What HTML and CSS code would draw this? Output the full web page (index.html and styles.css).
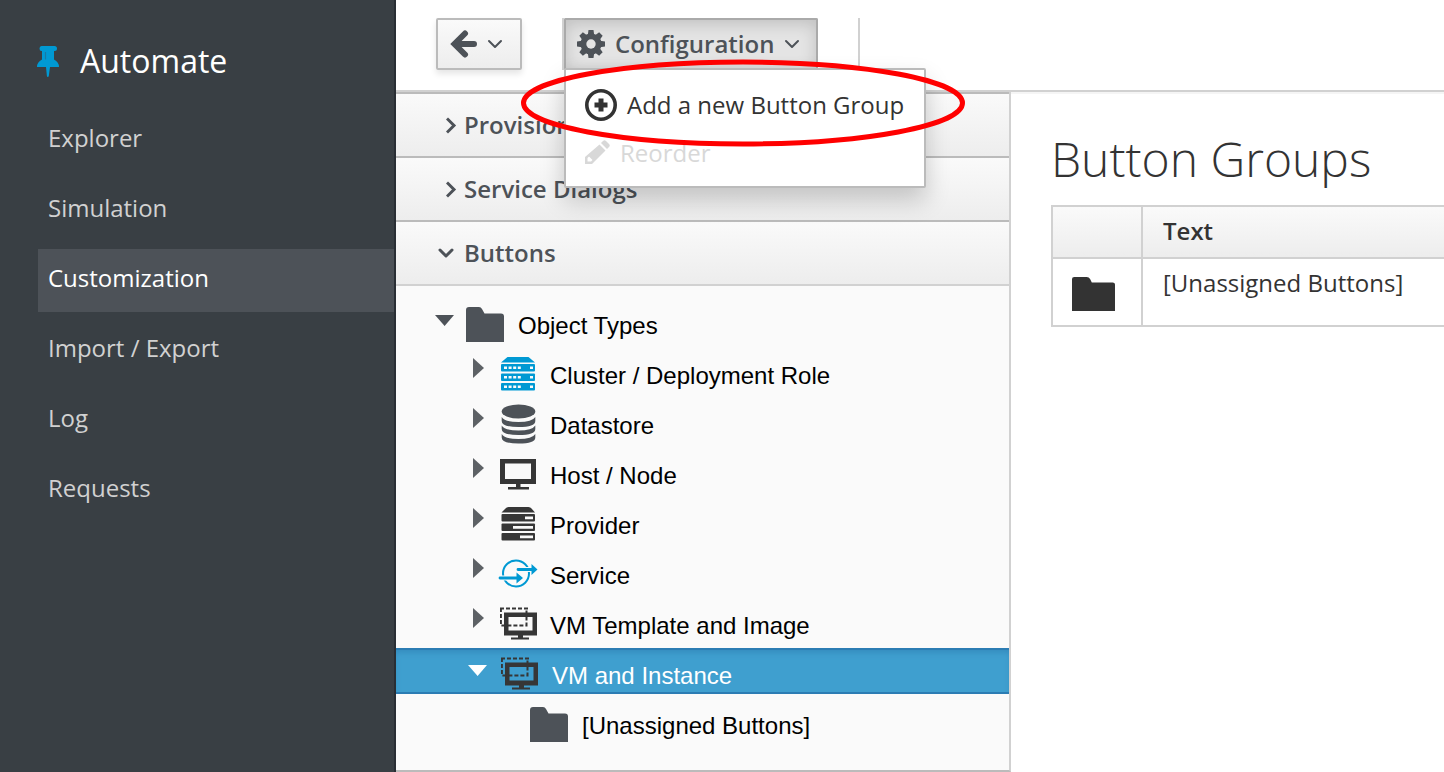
FILE: index.html
```html
<!DOCTYPE html>
<html lang="en">
<head>
<meta charset="utf-8">
<title>Automate: Customization</title>
<link rel="stylesheet" href="styles.css">
</head>
<body>
<svg class="sprite" aria-hidden="true">
  <symbol id="folder" viewBox="0 0 38 35"><path d="M0 35V3Q0 0 3 0h10q2 0 3 2l2.500 4.500H35q3 0 3 3V35z"/></symbol>
  <symbol id="down" viewBox="0 0 16 10"><path d="M2 2l6 6 6-6" fill="none" stroke="currentColor" stroke-linecap="round" stroke-linejoin="round"/></symbol>
  <symbol id="right" viewBox="0 0 12 18"><path d="M2 3.500l6 6-6 6" fill="none" stroke="currentColor" stroke-width="3" stroke-linecap="square"/></symbol>
  <symbol id="vm" viewBox="0 0 38 36">
    <path d="M4 6.500h33v23H23v2h6v2H11v-2h7v-2H4zM8.500 11v13.500h24V11z" fill-rule="evenodd"/>
    <path d="M0 2.500h28" fill="none" stroke="currentColor" stroke-width="2" stroke-dasharray="4 2"/>
    <path d="M.900 2v17.500h25.600V2" fill="none" stroke="currentColor" stroke-width="2" stroke-dasharray="4 2"/>
  </symbol>
</svg>
<div class="app">
  <nav class="sidebar" aria-label="Automate">
    <h2 class="sidebar-title">
      <svg class="pin" viewBox="0 0 22 31" aria-hidden="true"><path d="M4.500 0h13Q20 0 20 2.500T17.500 5H17v8.500Q22 16 22 21H13l-1.200 9q-.3 1-1 1t-.9-1L9 21H0q0-5 5-7.500V5h-.5Q2.500 5 2.500 2.500T4.500 0z"/><path d="M8.500 6v7.500" stroke="#1779a5" stroke-width="1.200"/></svg>
      Automate
    </h2>
    <ul class="sidebar-list">
      <li><a href="#">Explorer</a></li>
      <li><a href="#">Simulation</a></li>
      <li><a href="#" class="active" aria-current="page">Customization</a></li>
      <li><a href="#">Import / Export</a></li>
      <li><a href="#">Log</a></li>
      <li><a href="#">Requests</a></li>
    </ul>
  </nav>
  <div class="workspace">
    <header class="toolbar">
      <button class="btn btn-back" type="button" aria-label="Back">
        <svg class="icon-back" viewBox="0 0 28 28" aria-hidden="true"><path d="M15 3.500L4.500 14 15 24.500M6 14h18" fill="none" stroke="currentColor" stroke-width="6" stroke-linecap="round" stroke-linejoin="miter"/></svg>
        <svg class="chevron"><use href="#down"/></svg>
      </button>
      <div class="menu-group">
        <button class="btn btn-open" type="button" aria-expanded="true">
          <svg class="icon-gear" viewBox="-14 -14 28 28" aria-hidden="true">
            <g fill="currentColor"><circle r="10.500"/>
            <path id="tooth" d="M-3.200-9L-2.500-14h5L3.200-9zM-3.200 9L-2.500 14h5L3.200 9zM-9-3.200L-14-2.500v5L-9 3.200zM9-3.200L14-2.500v5L9 3.200z"/>
            <use href="#tooth" transform="rotate(45)"/></g>
            <circle r="4.700" fill="#e4e4e4"/>
          </svg>
          Configuration
          <svg class="chevron"><use href="#down"/></svg>
        </button>
        <div class="menu">
          <button class="menu-item" type="button">
            <svg class="icon-plus" viewBox="0 0 32 32" aria-hidden="true"><circle cx="16" cy="16" r="14.200" fill="none" stroke="currentColor" stroke-width="3.600"/><path d="M16 9.500v13M9.500 16h13" stroke="currentColor" stroke-width="5"/></svg>
            Add a new Button Group
          </button>
          <button class="menu-item" type="button" disabled>
            <svg class="icon-pencil" viewBox="0 0 25 25" aria-hidden="true"><path d="M14.500 4.500l6 6L7 24H0v-7zM2.500 18v3.500H6L7.500 20 4 16.500z" fill-rule="evenodd"/><path d="M16 3l2-2q1.500-1.500 3 0l3 3q1.500 1.500 0 3l-2 2z"/></svg>
            Reorder
          </button>
        </div>
        <svg class="callout" viewBox="0 0 444 88" aria-hidden="true"><ellipse cx="222" cy="44" rx="219.500" ry="41" fill="none" stroke="#f00" stroke-width="5"/></svg>
      </div>
    </header>
    <div class="columns">
      <section class="explorer">
        <button class="section" type="button"><svg class="arrow-right"><use href="#right"/></svg>Provisioning</button>
        <button class="section" type="button"><svg class="arrow-right"><use href="#right"/></svg>Service Dialogs</button>
        <button class="section section-open" type="button" aria-expanded="true"><svg class="arrow-down"><use href="#down"/></svg>Buttons</button>
        <ul class="tree">
          <li class="node root"><span class="toggle open"></span><svg class="folder"><use href="#folder"/></svg>Object Types</li>
          <li class="node"><span class="toggle"></span>
            <svg class="icon blue" viewBox="0 0 38 36" aria-hidden="true"><path d="M7.500 1h21l6.500 5.500H1z"/><rect x="1" y="8" width="34" height="7.500" rx="1"/><rect x="1" y="17.500" width="34" height="7.500" rx="1"/><rect x="1" y="27" width="34" height="7.500" rx="1"/><path d="M4 11.800h17M30 11.800h3M4 21.300h17M30 21.300h3M4 30.800h17M30 30.800h3" stroke="#fafafa" stroke-width="2.500" stroke-dasharray="3 1.600"/></svg>Cluster / Deployment Role</li>
          <li class="node"><span class="toggle"></span>
            <svg class="icon icon-tall" viewBox="0 0 38 40" aria-hidden="true"><ellipse cx="18.500" cy="7.500" rx="16.800" ry="7"/><path d="M1.700 13q3 5 16.800 5t16.800-5v4q0 6-16.800 6T1.700 17zM1.700 21.500q3 5 16.800 5t16.800-5v3.500q0 6-16.800 6T1.700 25zM1.700 30q3 5 16.800 5t16.800-5v3.500q0 6-16.800 6T1.700 33.500z"/></svg>Datastore</li>
          <li class="node"><span class="toggle"></span>
            <svg class="icon dark" viewBox="0 0 38 36" aria-hidden="true"><path d="M0 3h36v25H20.500v3H29v2.500H8V31h8v-3H0zM5 7.500v15.500h26V7.500z" fill-rule="evenodd"/></svg>Host / Node</li>
          <li class="node"><span class="toggle"></span>
            <svg class="icon dark" viewBox="0 0 38 36" aria-hidden="true"><path d="M8.500 1h20q2 0 3 1.500L35 6.500H1.500l4-4Q6.500 1 8.500 1z"/><rect x="1.500" y="8" width="33.500" height="7.500" rx="1"/><rect x="1.500" y="17.500" width="33.500" height="7.500" rx="1"/><rect x="1.500" y="27" width="33.500" height="7.500" rx="1"/><path d="M25 11.800h8M13 21.300h20M20 30.800h13" stroke="#fafafa" stroke-width="2.800"/></svg>Provider</li>
          <li class="node"><span class="toggle"></span>
            <svg class="icon icon-wide blue" viewBox="0 0 40 36" aria-hidden="true"><circle cx="18" cy="17.500" r="13" fill="none" stroke="currentColor" stroke-width="2"/><path d="M28 13.500h6M3 22h6" stroke="#fafafa" stroke-width="5"/><path d="M20 13.500h14M2 22h18" stroke="currentColor" stroke-width="2.800" stroke-linecap="round"/><path d="M33.500 8l6 5.500-6 5.500zM18.500 16.500l6.500 5.500-6.500 5.500z"/></svg>Service</li>
          <li class="node"><span class="toggle"></span><svg class="icon dark"><use href="#vm"/></svg>VM Template and Image</li>
          <li class="node selected" aria-current="true"><span class="toggle open"></span><svg class="icon dark"><use href="#vm"/></svg>VM and Instance</li>
          <li class="node leaf"><svg class="folder"><use href="#folder"/></svg>[Unassigned Buttons]</li>
        </ul>
      </section>
      <main class="content">
        <h1>Button Groups</h1>
        <table>
          <thead><tr><th class="icon-cell"></th><th scope="col">Text</th></tr></thead>
          <tbody><tr><td class="icon-cell"><svg class="folder-large" viewBox="0 0 38 35" preserveAspectRatio="none" aria-hidden="true"><path d="M0 35V3Q0 1 2 1h11q2 0 3 2l1.500 3.500H36q2 0 2 2V35z"/></svg></td><td>[Unassigned Buttons]</td></tr></tbody>
        </table>
      </main>
    </div>
  </div>
</div>
</body>
</html>
```
FILE: styles.css
```css
* { box-sizing: border-box; }
body {
  margin: 0;
  background: #fff;
  color: #333;
  font: 24px/32px "Open Sans", sans-serif;
}
ul { list-style: none; margin: 0; padding: 0; }
button { font: inherit; color: inherit; margin: 0; border-radius: 0; text-align: left; }
svg { flex: none; fill: currentColor; }
.sprite { position: absolute; width: 0; height: 0; }
.app { display: flex; min-height: 100vh; }

.sidebar {
  flex: 0 0 396px;
  padding: 37px 0 0 38px;
  background: #393f44;
  border-right: 2px solid #292e34;
}
.sidebar-title {
  display: flex;
  align-items: center;
  gap: 21px;
  margin: 0 0 24px -1px;
  color: #fff;
  font-size: 32px;
  font-weight: 400;
  line-height: 48px;
}
.pin { width: 22px; height: 31px; color: #0099d3; }
.sidebar-list { display: grid; gap: 7px; }
.sidebar-list a {
  display: block;
  padding: 13px 10px 18px;
  color: #d1d1d1;
  text-decoration: none;
}
.sidebar-list .active { background: #4d5258; color: #fff; }

.workspace { flex: 1; min-width: 0; display: flex; flex-direction: column; }
.toolbar {
  display: flex;
  gap: 40px;
  padding: 18px 40px 20px;
  border-bottom: 2px solid #d1d1d1;
}
.btn {
  display: flex;
  align-items: center;
  height: 52px;
  border: 2px solid #bbb;
  border-radius: 2px;
  background: linear-gradient(#fafafa, #ededed);
  box-shadow: 0 4px 6px rgba(3, 3, 3, .1);
  color: #4d5258;
  font-weight: 600;
}
.btn-back { gap: 9px; padding: 0 17px 0 12px; }
.icon-back, .icon-gear { width: 28px; height: 28px; }
.chevron { width: 16px; height: 10px; stroke-width: 2; }
.menu-group {
  position: relative;
  display: flex;
  padding-right: 40px;
  border: solid #d1d1d1;
  border-width: 0 2px;
}
.btn-open {
  gap: 10px;
  padding: 0 16px 0 11px;
  border-color: #aaa #aaa #bbb;
  background: #e4e4e4;
  box-shadow: inset 0 4px 16px rgba(3, 3, 3, .16);
}
.menu {
  position: absolute;
  top: 50px;
  left: 0;
  padding: 10px 0;
  border: 2px solid #bbb;
  border-radius: 2px;
  background: #fff;
  box-shadow: 0 12px 24px rgba(3, 3, 3, .2);
}
.menu-item {
  display: flex;
  align-items: center;
  gap: 10px;
  width: 100%;
  height: 48px;
  padding: 1px 20px 0 19px;
  border: 0;
  background: none;
  white-space: nowrap;
}
.menu-item:disabled { color: #d8d8d8; }
.icon-plus { width: 32px; height: 32px; }
.icon-pencil { width: 25px; height: 25px; }
.callout { position: absolute; top: 41px; left: -43px; width: 444px; height: 88px; pointer-events: none; }

.columns { flex: 1; display: flex; }
.explorer {
  flex: 0 0 615px;
  display: flex;
  flex-direction: column;
  border-right: 2px solid #d1d1d1;
  border-bottom: 2px solid #bbb;
  background: #fafafa;
}
.section {
  display: flex;
  align-items: center;
  gap: 6px;
  height: 64px;
  padding: 0 42px;
  border: 0;
  border-top: 2px solid #bbb;
  background: linear-gradient(#fafafa, #ededed);
  color: #4d5258;
  font-weight: 600;
}
.section-open { height: 66px; border-bottom: 2px solid #d1d1d1; }
.arrow-right { width: 12px; height: 18px; margin-left: 8px; }
.arrow-down { width: 16px; height: 10px; margin-right: 4px; stroke-width: 3; }

.tree {
  display: grid;
  gap: 4px;
  padding: 12px 0 24px;
  color: #000;
  font-family: "Liberation Sans", Arial, sans-serif;
}
.node {
  display: flex;
  align-items: center;
  height: 46px;
  padding: 10px 0 0 72px;
}
.root { padding-left: 38px; }
.leaf { padding-left: 134px; }
.toggle {
  width: 20px;
  height: 20px;
  margin: 0 11px 16px 1px;
  background: #5d6165;
  clip-path: polygon(20% 0, 75% 50%, 20% 100%);
}
.toggle.open { background: #4d5258; clip-path: polygon(0 35%, 95% 35%, 48% 90%); }
.icon { width: 38px; height: 36px; margin: 0 12px 4px 0; color: #4d5258; }
.icon-tall { height: 40px; }
.icon-wide { width: 40px; margin: 0 12px 4px -2px; }
.folder { width: 38px; height: 35px; margin: 0 14px 4px 0; color: #4d5258; }
.blue { color: #0099d3; }
.dark { color: #363636; }
.selected {
  background: #3f9fcf;
  box-shadow: inset 0 2px #2b7cb3, inset 0 -2px #2b7cb3, inset 0 6px 6px -2px #3489bc;
  color: #fff;
}
.selected .toggle { background: #fff; margin-left: 0; }
.selected .icon { margin-left: 2px; margin-right: 13px; }

.content {
  flex: 1;
  min-width: 0;
  padding: 33px 0 40px 40px;
  border-top: 2px solid #f5f5f5;
}
h1 { margin: 0 0 14px; font-size: 48px; font-weight: 300; line-height: 64px; }
table { width: 100%; border-collapse: collapse; }
th, td {
  padding: 8px 20px 10px;
  border: 2px solid #d1d1d1;
  border-right: 0;
  text-align: left;
  vertical-align: top;
}
th { background: linear-gradient(#fafafa, #ededed); font-weight: 600; }
.icon-cell { width: 90px; padding: 17px 20px 14px 19px; }
.folder-large { display: block; width: 43px; height: 35px; }
th.icon-cell { padding: 8px 20px 10px 19px; }
```
